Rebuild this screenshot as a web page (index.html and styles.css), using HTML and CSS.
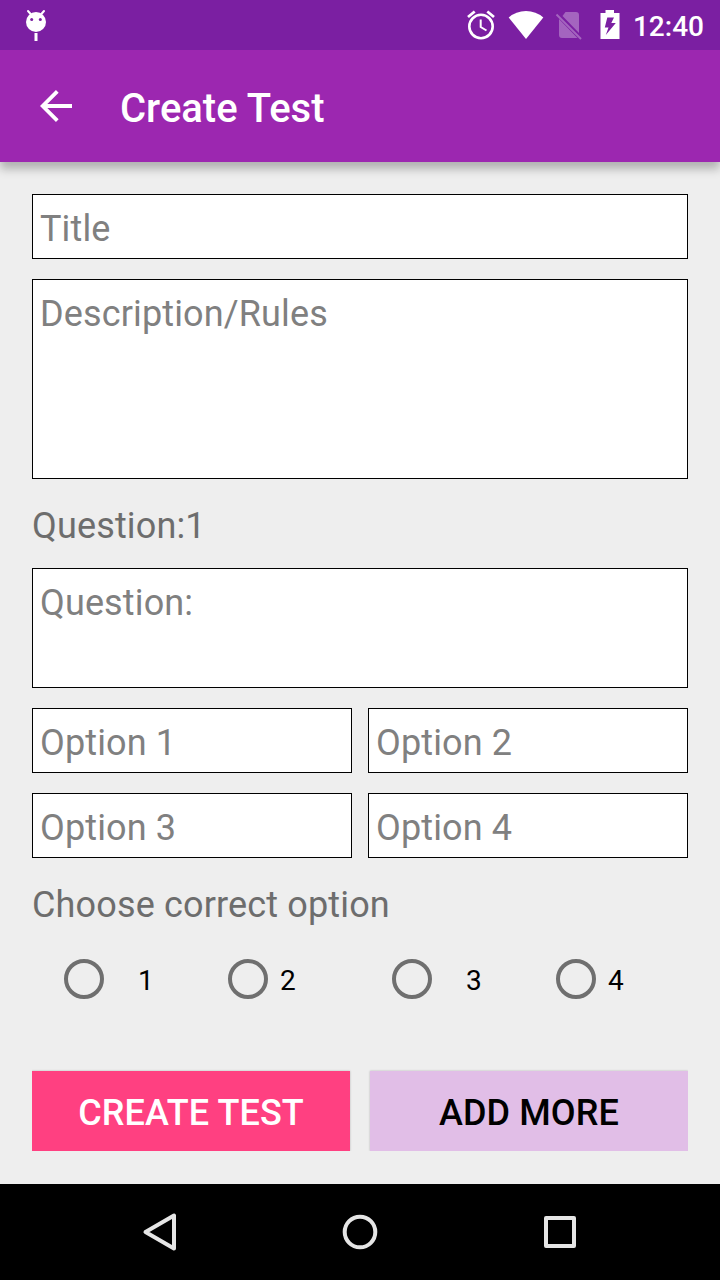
FILE: index.html
```html
<!DOCTYPE html>
<html lang="en">
<head>
<meta charset="utf-8">
<title>Create Test</title>
<link rel="stylesheet" href="styles.css">
</head>
<body>
<div class="screen">
  <div class="status-bar">
    <svg class="bug" width="24" height="34" viewBox="0 0 24 34">
      <path d="M4 3l3.500 4M20 3l-3.500 4" stroke="#fff" stroke-width="2" stroke-linecap="round"/>
      <circle cx="12" cy="14" r="10" fill="#fff"/>
      <circle cx="7.700" cy="11.500" r="1.500" fill="#7b1fa2"/>
      <circle cx="16.300" cy="11.500" r="1.500" fill="#7b1fa2"/>
      <rect x="10.500" y="25" width="3" height="8" fill="#fff"/>
    </svg>
    <div class="status-icons">
      <svg width="30" height="32" viewBox="0 0 30 32" fill="none" stroke="#fff">
        <circle cx="15" cy="18.500" r="11.700" stroke-width="2.600"/>
        <path d="M14.700 11.500V19L20.500 22.500" stroke-width="2"/>
        <path d="M2 9L8.700 3.500M28 9L21.300 3.500" stroke-width="2.800"/>
      </svg>
      <svg class="wifi" width="36" height="30" viewBox="0 0 36 30">
        <path d="M.7 7.500Q8 1 18 1T35.300 7.500L18 29Z" fill="#fff"/>
      </svg>
      <svg class="sim" width="28" height="30" viewBox="0 0 28 30">
        <path d="M10.500 2H21Q24 2 24 5V23L7.500 6ZM4 9L22.500 28H7Q4 28 4 25Z" fill="#fff" opacity=".31"/>
        <path d="M1.500 4.500L26 29" stroke="#fff" stroke-width="2" opacity=".31"/>
      </svg>
      <svg class="battery" width="20" height="30" viewBox="0 0 20 30">
        <path d="M.5 4H5.500V1H14V4H19.500V30H.5Z" fill="#fff"/>
        <path d="M7.300 8.500H14L11.300 14H15.800L5.800 26L8.500 18.500H4.800Z" fill="#7b1fa2"/>
      </svg>
      <span class="clock">12:40</span>
    </div>
  </div>

  <header class="app-bar">
    <svg class="back" width="32" height="32" viewBox="0 0 32 32" fill="none" stroke="#fff" stroke-width="3.800">
      <path d="M32 16H3M17.300 1.400L2.700 16L17.300 30.600"/>
    </svg>
    <h1 class="app-title">Create Test</h1>
  </header>

  <main class="form">
    <div class="field">Title</div>
    <div class="field field-description">Description/Rules</div>
    <div class="label label-question">Question:1</div>
    <div class="field field-question">Question:</div>
    <div class="options">
      <div class="field">Option 1</div>
      <div class="field">Option 2</div>
      <div class="field">Option 3</div>
      <div class="field">Option 4</div>
    </div>
    <div class="label label-choose">Choose correct option</div>
    <div class="radios">
      <div class="radio radio-wide"><span class="ring"></span><span>1</span></div>
      <div class="radio"><span class="ring"></span><span>2</span></div>
      <div class="radio radio-wide"><span class="ring"></span><span>3</span></div>
      <div class="radio"><span class="ring"></span><span>4</span></div>
    </div>
    <div class="actions">
      <div class="button button-create">CREATE TEST</div>
      <div class="button button-add">ADD MORE</div>
    </div>
  </main>

  <nav class="nav-bar">
    <svg width="40" height="40" viewBox="0 0 40 40" fill="none" stroke="#e6e6e6" stroke-width="4" stroke-linejoin="round">
      <path d="M34 3.500V36.500L5.500 20Z"/>
    </svg>
    <svg width="40" height="40" viewBox="0 0 40 40" fill="none" stroke="#e6e6e6" stroke-width="4">
      <circle cx="20" cy="20" r="15.300"/>
    </svg>
    <svg width="40" height="40" viewBox="0 0 40 40" fill="none" stroke="#e6e6e6" stroke-width="4" stroke-linejoin="round">
      <rect x="6" y="6" width="28" height="28"/>
    </svg>
  </nav>
</div>
</body>
</html>
```
FILE: styles.css
```css
* {
  box-sizing: border-box;
}

body {
  margin: 0;
  font-family: Roboto, "Liberation Sans", sans-serif;
}

svg {
  display: block;
  flex: none;
}

.screen {
  width: 720px;
  height: 1280px;
  display: flex;
  flex-direction: column;
  background: #eee;
  overflow: hidden;
}

.status-bar {
  height: 50px;
  flex: none;
  display: flex;
  justify-content: space-between;
  padding: 8px 16px 0 24px;
  background: #7b1fa2;
}

.status-icons {
  display: flex;
}

.wifi {
  margin: 2px 0 0 12px;
}

.sim {
  margin: 2px 0 0 11px;
}

.battery {
  margin: 1px 0 0 17px;
}

.clock {
  margin: 2px 0 0 13px;
  font-size: 28px;
  line-height: 33px;
  font-weight: 500;
  color: #fff;
}

.app-bar {
  height: 112px;
  flex: none;
  display: flex;
  align-items: flex-start;
  padding: 40px 40px 0;
  background: #9c27b0;
  box-shadow: 0 7px 9px rgba(0, 0, 0, 0.26);
  clip-path: inset(0 0 -24px 0);
}

.app-title {
  margin: -5px 0 0 48px;
  font-size: 40px;
  line-height: 48px;
  font-weight: 500;
  color: #fff;
}

.form {
  flex: 1;
  padding: 32px 32px 0;
}

.field {
  height: 65px;
  padding: 13px 7px 0;
  border: 1px solid #000;
  background: #fff;
  font-size: 36px;
  line-height: 42px;
  letter-spacing: 0.14px;
  color: #808080;
}

.field-description {
  height: 200px;
  margin-top: 20px;
}

.field-question {
  height: 120px;
}

.label {
  height: 42px;
  font-size: 36px;
  line-height: 42px;
  letter-spacing: 0.15px;
  color: #6d6d6d;
}

.label-question {
  margin: 26px 0 21px;
}

.label-choose {
  margin-top: 26px;
}

.options {
  display: grid;
  grid-template-columns: 1fr 1fr;
  gap: 20px 16px;
  margin-top: 20px;
}

.radios {
  display: grid;
  grid-template-columns: repeat(4, 164px);
  height: 40px;
  margin-top: 33px;
  padding-left: 32px;
}

.radio {
  display: flex;
  align-items: flex-start;
  gap: 12px;
  font-size: 28px;
  line-height: 44px;
}

.radio-wide {
  gap: 34px;
}

.ring {
  width: 40px;
  height: 40px;
  border: 4px solid #6f6f6f;
  border-radius: 50%;
}

.actions {
  display: grid;
  grid-template-columns: 1fr 1fr;
  gap: 20px;
  margin-top: 72px;
}

.button {
  height: 80px;
  padding-top: 1px;
  font-size: 36px;
  line-height: 82px;
  letter-spacing: 0.1px;
  font-weight: 500;
  text-align: center;
  box-shadow: 0 0 2px rgba(0, 0, 0, 0.25);
}

.button-create {
  background: #ff4081;
  color: #fff;
  clip-path: inset(-3px -3px 0 0);
}

.button-add {
  background: #e1bee7;
  color: #000;
  clip-path: inset(-3px 0 0 -3px);
}

.nav-bar {
  height: 96px;
  flex: none;
  display: flex;
  justify-content: center;
  align-items: center;
  gap: 160px;
  background: #000;
}
```
